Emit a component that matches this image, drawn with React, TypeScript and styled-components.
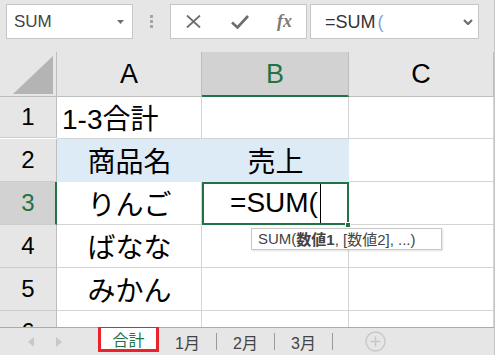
import styled, { createGlobalStyle } from 'styled-components';

const GlobalStyle = createGlobalStyle`
    html, body {
        margin: 0;
        padding: 0;
        background: #fff;
    }
    * {
        box-sizing: border-box;
    }
`;

const GREEN = '#217346';
const FONT = `"Liberation Sans", "Noto Sans CJK JP", sans-serif`;

const columns = ['A', 'B', 'C'];

const rows = [
    { no: 1, height: 41, cells: [{ text: '1-3合計', align: 'left' }, { text: '' }, { text: '' }] },
    { no: 2, height: 43, cells: [{ text: '商品名', fill: true }, { text: '売上', fill: true }, { text: '' }] },
    { no: 3, height: 43, active: true, cells: [{ text: 'りんご' }, { text: '=SUM(', editing: true }, { text: '' }] },
    { no: 4, height: 43, cells: [{ text: 'ばなな' }, { text: '' }, { text: '' }] },
    { no: 5, height: 43, cells: [{ text: 'みかん' }, { text: '' }, { text: '' }] },
    { no: 6, height: 43, cells: [{ text: '' }, { text: '' }, { text: '' }] },
];

const tabs = ['1月', '2月', '3月'];

export default function App() {
    return (
        <>
            <GlobalStyle />
            <Window>
                <Toolbar>
                    <NameBox>
                        <span>SUM</span>
                        <svg width="7" height="4" viewBox="0 0 7 4">
                            <path d="M0 0 H7 L3.5 4 Z" fill="#707070" />
                        </svg>
                    </NameBox>
                    <Grip>
                        <i /><i /><i />
                    </Grip>
                    <FormulaTools>
                        <ToolIcon>
                            <svg width="15" height="13" viewBox="0 0 15 13">
                                <path d="M1 0.5 L14 12.5 M14 0.5 L1 12.5" stroke="#6d6d6d" strokeWidth="1.8" fill="none" />
                            </svg>
                        </ToolIcon>
                        <ToolIcon>
                            <svg width="18" height="14" viewBox="0 0 18 14">
                                <path d="M1 7.5 L6.5 12.5 L17 1" stroke="#6d6d6d" strokeWidth="2.6" fill="none" />
                            </svg>
                        </ToolIcon>
                        <FxLabel>fx</FxLabel>
                    </FormulaTools>
                    <FormulaInput>
                        <span>=SUM<Paren>(</Paren></span>
                        <svg width="10" height="6" viewBox="0 0 10 6">
                            <path d="M1 1 L5 5 L9 1" stroke="#6d6d6d" strokeWidth="2.2" fill="none" />
                        </svg>
                    </FormulaInput>
                </Toolbar>

                <Sheet>
                    <Corner>
                        <svg width="40" height="38" viewBox="0 0 40 38">
                            <path d="M0 38 H40 V0 Z" fill="#b4b4b4" />
                        </svg>
                    </Corner>
                    {columns.map(c => (
                        <ColHeader key={c} $selected={c === 'B'}>{c}</ColHeader>
                    ))}
                    {rows.map(r => (
                        <Row key={r.no} r={r} />
                    ))}
                </Sheet>

                <SheetBar>
                    <SheetNav>
                        <svg width="6" height="10" viewBox="0 0 6 10">
                            <path d="M6 0 V10 L0 5 Z" fill="#c8c8c8" />
                        </svg>
                        <svg width="6" height="10" viewBox="0 0 6 10">
                            <path d="M0 0 V10 L6 5 Z" fill="#c8c8c8" />
                        </svg>
                    </SheetNav>
                    <ActiveTab>合計</ActiveTab>
                    {tabs.map(t => (
                        <Tab key={t}>{t}</Tab>
                    ))}
                    <AddSheet>
                        <svg width="21" height="21" viewBox="0 0 21 21">
                            <circle cx="10.5" cy="10.5" r="9.5" stroke="#c8c8c8" strokeWidth="1.4" fill="none" />
                            <path d="M10.5 5.5 V15.5 M5.5 10.5 H15.5" stroke="#c8c8c8" strokeWidth="1.6" />
                        </svg>
                    </AddSheet>
                </SheetBar>
            </Window>
        </>
    );
}

function Row({ r }: { r: any }) {
    return (
        <>
            <RowHeader $selected={!!r.active} style={{ height: r.height }}>{r.no}</RowHeader>
            {r.cells.map((cell: any, i: number) => (
                <Cell
                    key={i}
                    $fill={!!cell.fill}
                    $align={cell.align || 'center'}
                    $active={!!cell.editing}
                >
                    {cell.text}
                    {cell.editing && (
                        <>
                            <Caret />
                            <ActiveFrame><FillHandle /></ActiveFrame>
                            <ArgTip>SUM(<b>数値1</b>, [数値2], ...)</ArgTip>
                        </>
                    )}
                </Cell>
            ))}
        </>
    );
}

const Window = styled.div`
    width: 495px;
    height: 355px;
    display: flex;
    flex-direction: column;
    background: #e6e6e6;
    border-right: 1px solid #c6c6c6;
    font-family: ${FONT};
    overflow: hidden;
`;

const Toolbar = styled.div`
    height: 52px;
    flex: none;
    display: flex;
    align-items: flex-start;
    padding: 4px 0 0 6px;
`;

const Box = styled.div`
    height: 35px;
    background: #fff;
    border: 1px solid #c6c6c6;
    display: flex;
    align-items: center;
`;

const NameBox = styled(Box)`
    width: 127px;
    padding: 1px 8px 0 7px;
    justify-content: space-between;
    font-size: 17px;
    color: #444;
`;

const Grip = styled.div`
    width: 37px;
    height: 35px;
    display: flex;
    flex-direction: column;
    align-items: center;
    justify-content: center;
    gap: 2px;

    i {
        display: block;
        width: 3px;
        height: 3px;
        background: #a6a6a6;
    }
`;

const FormulaTools = styled(Box)`
    width: 137px;
    padding-left: 15px;
`;

const ToolIcon = styled.div`
    width: 45px;
    display: flex;
    align-items: center;
`;

const FxLabel = styled.span`
    font-family: "Liberation Serif", serif;
    font-style: italic;
    font-weight: bold;
    font-size: 18px;
    color: #7a7a7a;
    margin-left: 1px;
`;

const FormulaInput = styled(Box)`
    width: 169px;
    margin-left: 3px;
    padding: 1px 5px 0 14px;
    justify-content: space-between;
    font-size: 18px;
    color: #333;
`;

const Paren = styled.span`
    color: #7fa7d9;
    margin-left: 2px;
`;

const Sheet = styled.div`
    flex: 1;
    display: grid;
    grid-template-columns: 57px 145px 147px 145px;
    grid-template-rows: 45px;
    grid-auto-rows: min-content;
    align-content: start;
    overflow: hidden;
    background: #fff;
`;

const Corner = styled.div`
    background: #e6e6e6;
    border-right: 1px solid #bdbdbd;
    border-bottom: 1px solid #bdbdbd;
    display: flex;
    align-items: flex-end;
    justify-content: flex-end;
    padding: 0 3px 2px 0;
`;

const ColHeader = styled.div<{ $selected?: boolean }>`
    display: flex;
    align-items: center;
    justify-content: center;
    font-size: 27px;
    color: ${p => (p.$selected ? GREEN : '#000')};
    background: ${p => (p.$selected ? '#d2d2d2' : '#e6e6e6')};
    border-right: 1px solid #bdbdbd;
    border-bottom: ${p => (p.$selected ? `2px solid ${GREEN}` : '1px solid #bdbdbd')};
    padding-top: ${p => (p.$selected ? '1px' : '0')};
`;

const RowHeader = styled.div<{ $selected?: boolean }>`
    display: flex;
    align-items: center;
    justify-content: center;
    font-size: 24px;
    color: ${p => (p.$selected ? GREEN : '#000')};
    background: ${p => (p.$selected ? '#d2d2d2' : '#e6e6e6')};
    border-right: ${p => (p.$selected ? `2px solid ${GREEN}` : '1px solid #bdbdbd')};
    border-bottom: 1px solid #cdcdcd;
    padding-left: ${p => (p.$selected ? '1px' : '0')};
`;

const Cell = styled.div<{ $fill?: boolean; $align?: string; $active?: boolean }>`
    position: relative;
    display: flex;
    align-items: center;
    justify-content: ${p => (p.$align === 'left' ? 'flex-start' : 'center')};
    padding: 0 4px 1px 5px;
    font-size: 28px;
    color: #000;
    white-space: nowrap;
    background: ${p => (p.$fill ? '#ddebf7' : '#fff')};
    border-right: 1px solid ${p => (p.$fill ? '#ddebf7' : '#d4d4d4')};
    border-bottom: 1px solid ${p => (p.$fill ? '#ddebf7' : '#d4d4d4')};
    z-index: ${p => (p.$active ? 2 : 0)};
`;

const Caret = styled.span`
    display: inline-block;
    width: 1px;
    height: 40px;
    background: #000;
    margin-left: 2px;
`;

const ActiveFrame = styled.div`
    position: absolute;
    top: 0;
    left: 0;
    right: -1px;
    bottom: -1px;
    border: 2px solid ${GREEN};
`;

const FillHandle = styled.div`
    position: absolute;
    right: -4px;
    bottom: -5px;
    width: 6px;
    height: 6px;
    background: ${GREEN};
    border: 1px solid #fff;
`;

const ArgTip = styled.div`
    position: absolute;
    left: 49px;
    top: 46px;
    width: 191px;
    height: 22px;
    display: flex;
    align-items: center;
    padding: 0 0 1px 6px;
    background: #fff;
    border: 1px solid #c6c6c6;
    box-shadow: 1px 1px 2px rgba(0, 0, 0, 0.12);
    font-size: 15px;
    color: #444;
    white-space: pre;

    b {
        font-weight: bold;
    }
`;

const SheetBar = styled.div`
    height: 28px;
    flex: none;
    display: flex;
    align-items: center;
    border-top: 1px solid #ababab;
`;

const SheetNav = styled.div`
    width: 98px;
    display: flex;
    gap: 22px;
    padding-left: 28px;
`;

const ActiveTab = styled.div`
    width: 61px;
    height: 27px;
    align-self: flex-start;
    margin-top: -3px;
    display: flex;
    align-items: center;
    justify-content: center;
    background: #fff;
    border: 3px solid #e8242a;
    font-size: 16px;
    color: ${GREEN};
`;

const Tab = styled.div`
    width: 58px;
    height: 17px;
    display: flex;
    align-items: center;
    justify-content: center;
    border-right: 1px solid #9a9a9a;
    font-size: 16px;
    color: #444;

    &:last-of-type {
        width: 57px;
    }
`;

const AddSheet = styled.div`
    display: flex;
    margin-left: 32px;
`;
